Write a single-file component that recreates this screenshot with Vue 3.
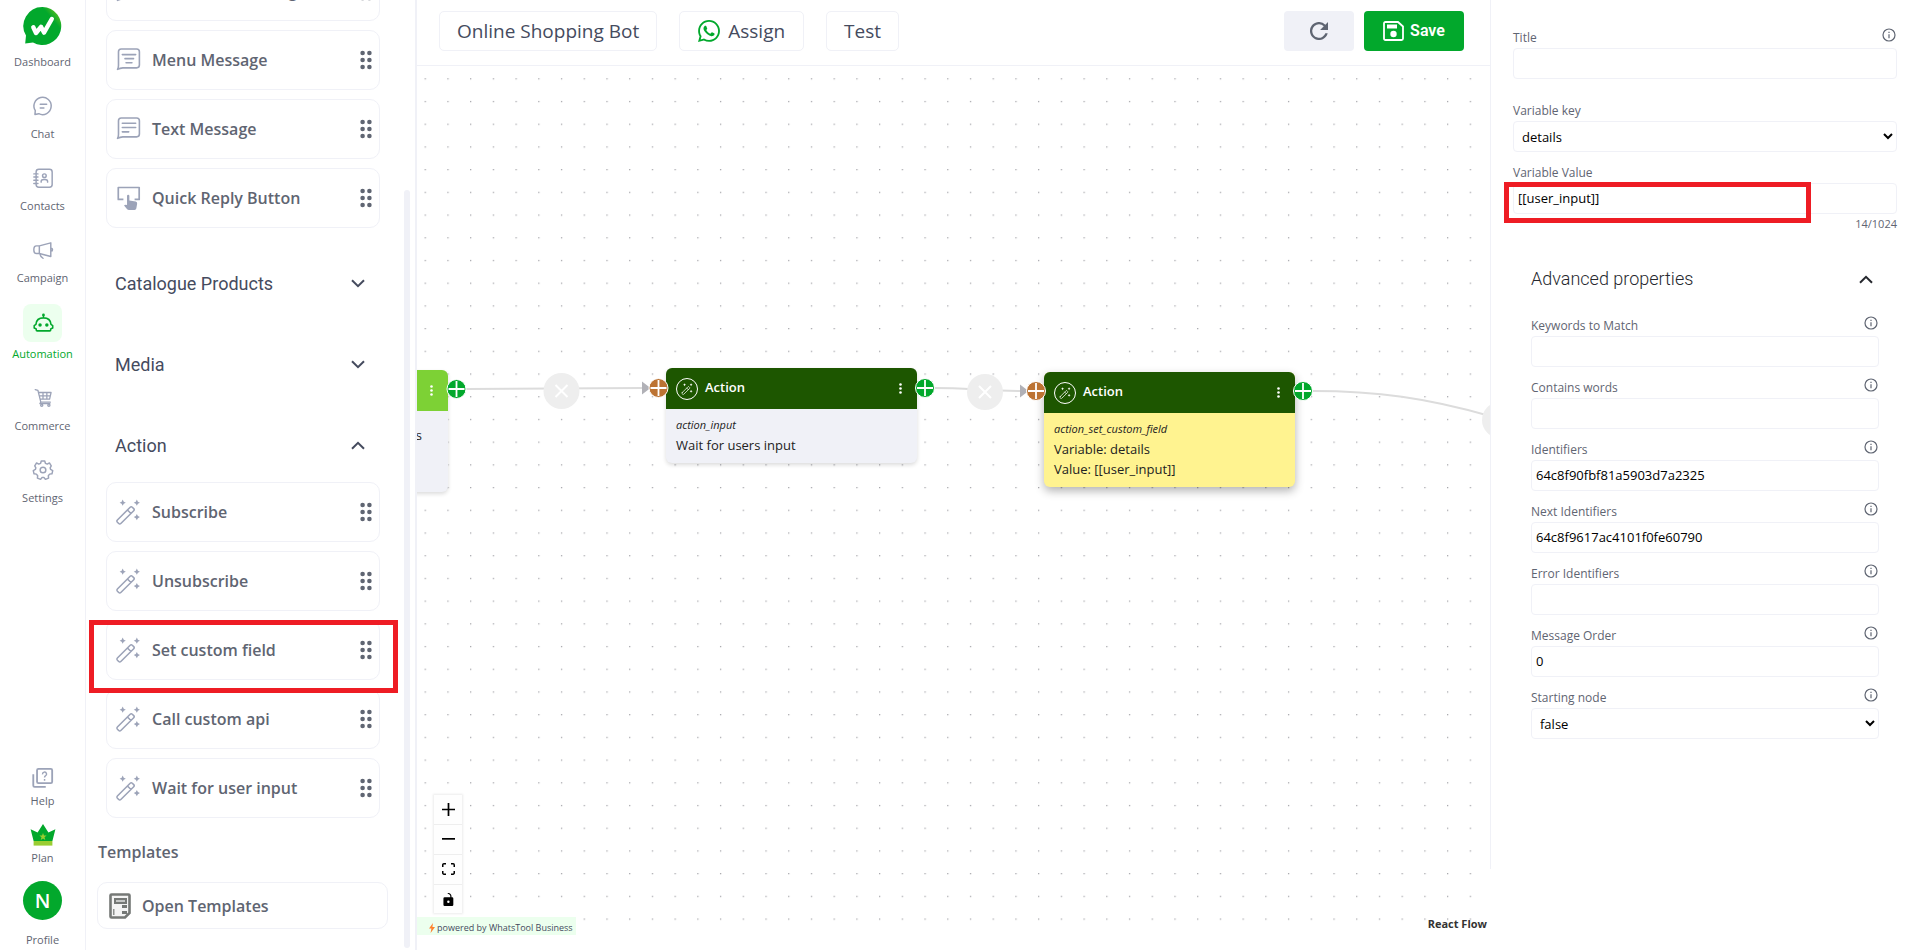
<script setup>
import { ref } from 'vue'

const stroke = (body, width = 1.6) =>
  `<g fill="none" stroke="currentColor" stroke-width="${width}" stroke-linecap="round" stroke-linejoin="round">${body}</g>`

const bubble = 'M2.5 21C3.2 19.9 3.4 18.8 3.4 17.4V4.6Q3.4 2 6 2H20.4Q23 2 23 4.6V17Q23 19.6 20.4 19.6H7.5Q5 19.8 2.5 21Z'
const sparkle = (x, y) => `<path d="M${x} ${y - 3}L${x + 1} ${y - 1}L${x + 3} ${y}L${x + 1} ${y + 1}L${x} ${y + 3}L${x - 1} ${y + 1}L${x - 3} ${y}L${x - 1} ${y - 1}Z" fill="currentColor"/>`

const icons = {
  chat: stroke('<path d="M3.2 21.2L3.6 17A9.4 9.4 0 1 1 7.4 20.4Z"/><path d="M9 10.2H16M9 14.2H13"/>', 1.6),
  contacts: stroke('<rect x="4.5" y="2.5" width="17.5" height="19.5" rx="3"/><path d="M2 7.5H6.5M2 11H6.5M2 14.5H6.5M2 18H6.5"/><circle cx="13.5" cy="9.5" r="2"/><path d="M10 16.5V15.5Q10 13.6 13.5 13.6T17 15.5V16.5"/>', 1.6),
  campaign: stroke('<path d="M8 7.5L20.5 4.2V19L8 15.8H5Q2 15.8 2 11.6T5 7.5ZM8 7.5V15.8M20.5 10Q22.4 10 22.4 11.7T20.5 13.4M8.5 16Q9 19 12 21"/>', 1.6),
  automation: stroke('<path d="M12.5 5.5V3.5M4.3 13.5Q4.8 6.4 12.5 6.4T20.7 13.5L22.6 14.8V17.4L20.4 18.4V19.6Q20.4 20.6 19.4 20.6H5.6Q4.6 20.6 4.6 19.6V18.4L2.4 17.4V14.8Z"/>', 1.7) +
    '<circle cx="12.5" cy="3.2" r="1.5" fill="currentColor"/><circle cx="8.8" cy="14.2" r="1.9" fill="currentColor"/><circle cx="16.2" cy="14.2" r="1.9" fill="currentColor"/>',
  commerce: stroke('<path d="M3.5 2.8L6.5 3.8L9.6 16.5H20M7.2 6H20.8L19.2 13.2H9M7.8 9.6H20M12 6V13.2M16.2 6V13.2M9.6 16.5L8.6 18.2H19.5"/><circle cx="10.6" cy="19.8" r="1.2"/><circle cx="18.4" cy="19.8" r="1.2"/>', 1.4),
  settings: stroke('<circle cx="12" cy="12" r="3.1"/><path d="M10.1 2.2H13.9L14.6 4.7L16.7 5.6L19 4.3L21 7.6L19.8 9.7L20.3 11.4L22.6 12.6L21.8 16.2L19.2 16.5L17.8 18.2L18.1 20.8L14.6 22.2L13 20.1H11L9.4 22.2L5.9 20.8L6.2 18.2L4.8 16.5L2.2 16.2L1.4 12.6L3.7 11.4L4.2 9.7L3 7.6L5 4.3L7.3 5.6L9.4 4.7Z"/>', 1.6),
  help: '<g fill="none" stroke="currentColor" stroke-width="2"><rect x="5.5" y="2" width="16.5" height="15.5" rx="1.5"/><path d="M1.4 8V20.2Q1.4 21.6 2.8 21.6H15"/></g><path d="M11.5 8A2.2 2.2 0 1 1 14.6 9.7Q13.7 10.3 13.7 11.5M13.7 13.2V15" fill="none" stroke="currentColor" stroke-width="1.6"/>',
  menuMessage: stroke(`<path d="${bubble}"/><path d="M7 7.2H19.5M9.5 11H17.5M10.5 14.8H16"/>`, 1.5),
  textMessage: stroke(`<path d="${bubble}"/><path d="M7 6.9H19.5M7 10.9H19.5M7 14.9H13"/>`, 1.5),
  quickReply: '<path d="M8 13.6H3.2V2.4H22.8V13.6H18.5" fill="none" stroke="currentColor" stroke-width="1.6" stroke-linejoin="round"/><path d="M11.4 10.3Q11.4 9.1 12.5 9.1T13.6 10.3V14.6L19.5 15.6Q21.1 16 20.9 17.6L20.1 22.2Q19.8 23.6 18.5 23.6H13.2Q12.2 23.6 11.5 22.9L8.6 19.2Q9.6 18 11.4 18.8Z" fill="currentColor"/>',
  wand: stroke('<path d="M2.3 20.2L14.6 7.9Q15.6 6.9 16.6 7.9L18 9.3Q19 10.3 18 11.3L5.6 23.6Q4.6 24.6 3.6 23.6L2.3 22.3Q1.3 21.2 2.3 20.2ZM12 10.6L15.3 14"/>', 1.5) +
    sparkle(7.4, 3.6) + sparkle(21, 3.6) + sparkle(21, 17.4)
}

const navItems = [
  { label: 'Chat', icon: 'chat' },
  { label: 'Contacts', icon: 'contacts' },
  { label: 'Campaign', icon: 'campaign' },
  { label: 'Automation', icon: 'automation', active: true },
  { label: 'Commerce', icon: 'commerce' },
  { label: 'Settings', icon: 'settings' }
]

const messageBlocks = [
  { label: 'Interactive Message', icon: 'menuMessage' },
  { label: 'Menu Message', icon: 'menuMessage' },
  { label: 'Text Message', icon: 'textMessage' },
  { label: 'Quick Reply Button', icon: 'quickReply' }
]

const actionBlocks = [
  { label: 'Subscribe' },
  { label: 'Unsubscribe' },
  { label: 'Set custom field', marked: true },
  { label: 'Call custom api' },
  { label: 'Wait for user input' }
]

const nodes = [
  { cls: 'node-input', type: 'action_input', lines: ['Wait for users input'] },
  { cls: 'node-field', type: 'action_set_custom_field', lines: ['Variable: details', 'Value: [[user_input]]'] }
]

const title = ref('')
const variableKey = ref('details')
const variableValue = ref('[[user_input]]')
const startingNode = ref('false')
const advancedFields = ref([
  { id: 'keywords', label: 'Keywords to Match', value: '' },
  { id: 'contains', label: 'Contains words', value: '' },
  { id: 'identifiers', label: 'Identifiers', value: '64c8f90fbf81a5903d7a2325' },
  { id: 'next', label: 'Next Identifiers', value: '64c8f9617ac4101f0fe60790' },
  { id: 'error', label: 'Error Identifiers', value: '' },
  { id: 'order', label: 'Message Order', value: '0' }
])
</script>

<template>
  <div class="app">
    <nav class="rail">
      <a class="rail-item logo-item" href="#">
        <svg class="logo" viewBox="0 0 39 38">
          <defs>
            <linearGradient id="logoShade" x1="0.55" y1="0.25" x2="0.85" y2="0">
              <stop offset="0.3" stop-color="#02a82c" />
              <stop offset="1" stop-color="#63c020" />
            </linearGradient>
          </defs>
          <path d="M19.5 0A19 19 0 1 1 10 35.6L2.2 36.4L3 28.6A19 19 0 0 1 19.5 0Z" fill="url(#logoShade)" />
          <path d="M10.3 20.3L13 26L18 19.8L21 25.6L28.8 12" fill="none" stroke="#fff" stroke-width="4.4" stroke-linecap="round" stroke-linejoin="round" />
        </svg>
        <span>Dashboard</span>
      </a>
      <a v-for="item in navItems" :key="item.label" class="rail-item" :class="{ active: item.active }" href="#">
        <span class="rail-icon"><svg viewBox="0 0 24 24" v-html="icons[item.icon]"></svg></span>
        <span>{{ item.label }}</span>
      </a>
      <div class="rail-bottom">
        <a class="rail-item small-item" href="#">
          <svg class="help-icon" viewBox="0 0 24 24" v-html="icons.help"></svg>
          <span>Help</span>
        </a>
        <a class="rail-item small-item" href="#">
          <svg class="crown" viewBox="0 0 26 22">
            <path d="M3.6 17L.6 5.2L7.6 8.4L13 0L18.4 8.4L25.4 5.2L22.4 17Z" fill="#02a82c" />
            <path d="M3.6 17H22.4V21.6H3.6Z" fill="#9acd32" />
            <path d="M13 9L14 11.6H16.6L14.5 13.3L15.3 16L13 14.4L10.7 16L11.5 13.3L9.4 11.6H12Z" fill="#9acd32" />
          </svg>
          <span>Plan</span>
        </a>
        <a class="rail-item profile-item" href="#">
          <span class="avatar">N</span>
          <span>Profile</span>
        </a>
      </div>
    </nav>

    <aside class="palette">
      <div class="blocks first-blocks">
        <div v-for="b in messageBlocks" :key="b.label" class="block">
          <svg class="block-icon" viewBox="2 1 22.5 22.5" v-html="icons[b.icon]"></svg>
          <span class="block-label">{{ b.label }}</span>
          <svg class="grip" viewBox="0 0 12 20"><g v-for="y in [3, 10, 17]" :key="y"><circle cx="2.6" :cy="y" r="2.3" /><circle cx="9.4" :cy="y" r="2.3" /></g></svg>
        </div>
      </div>
      <button type="button" class="group">Catalogue Products<svg class="chevron" viewBox="0 0 14 9"><path d="M1 1.2L7 7.2L13 1.2" /></svg></button>
      <button type="button" class="group">Media<svg class="chevron" viewBox="0 0 14 9"><path d="M1 1.2L7 7.2L13 1.2" /></svg></button>
      <button type="button" class="group">Action<svg class="chevron" viewBox="0 0 14 9"><path d="M1 7.8L7 1.8L13 7.8" /></svg></button>
      <div class="blocks">
        <div v-for="b in actionBlocks" :key="b.label" class="block">
          <svg class="block-icon wand-icon" viewBox="0 0 25 25" v-html="icons.wand"></svg>
          <span class="block-label">{{ b.label }}</span>
          <svg class="grip" viewBox="0 0 12 20"><g v-for="y in [3, 10, 17]" :key="y"><circle cx="2.6" :cy="y" r="2.3" /><circle cx="9.4" :cy="y" r="2.3" /></g></svg>
          <span v-if="b.marked" class="mark mark-block"></span>
        </div>
      </div>
      <h2 class="templates-title">Templates</h2>
      <button type="button" class="open-templates">
        <svg viewBox="0 0 22 26">
          <path d="M2.5 1.5H19.5Q20.5 1.5 20.5 2.5V20L16 24.5H2.5Q1.5 24.5 1.5 23.5V2.5Q1.5 1.5 2.5 1.5Z" fill="#f4f4f4" stroke="#757876" stroke-width="2.6" />
          <rect x="6" y="6" width="11" height="4" fill="#c4c6c5" stroke="#757876" stroke-width="2" />
          <path d="M13 13.5H18M13 19.5H18" stroke="#757876" stroke-width="3" />
          <path d="M4.8 16V22" stroke="#757876" stroke-width="1.2" />
        </svg>
        Open Templates
      </button>
      <span class="scroll-thumb"></span>
    </aside>

    <main class="stage">
      <header class="toolbar">
        <button type="button" class="tool">Online Shopping Bot</button>
        <button type="button" class="tool assign">
          <svg viewBox="2 2 20 20"><path fill="#02a82c" d="M12.04 2C6.58 2 2.13 6.45 2.13 11.91C2.13 13.66 2.59 15.36 3.45 16.86L2.05 22L7.3 20.62C8.75 21.41 10.38 21.83 12.04 21.83C17.5 21.83 21.95 17.38 21.95 11.92C21.95 9.27 20.92 6.78 19.05 4.91C17.18 3.03 14.69 2 12.04 2M12.05 3.67C14.25 3.67 16.31 4.53 17.87 6.09C19.42 7.65 20.28 9.72 20.28 11.92C20.28 16.46 16.58 20.15 12.04 20.15C10.56 20.15 9.11 19.76 7.85 19L7.55 18.83L4.43 19.65L5.26 16.61L5.06 16.29C4.24 15 3.8 13.47 3.8 11.91C3.81 7.37 7.5 3.67 12.05 3.67M8.53 7.33C8.37 7.33 8.1 7.39 7.87 7.64C7.65 7.89 7 8.5 7 9.71C7 10.93 7.89 12.1 8 12.27C8.14 12.44 9.76 14.94 12.25 16C12.84 16.27 13.3 16.42 13.66 16.53C14.25 16.72 14.79 16.69 15.22 16.63C15.7 16.56 16.68 16.03 16.89 15.45C17.1 14.87 17.1 14.38 17.04 14.27C16.97 14.17 16.81 14.11 16.56 14C16.31 13.86 15.09 13.26 14.87 13.18C14.64 13.1 14.5 13.06 14.31 13.3C14.15 13.55 13.67 14.11 13.53 14.27C13.38 14.44 13.24 14.46 13 14.34C12.74 14.21 11.94 13.95 11 13.11C10.26 12.45 9.77 11.64 9.62 11.39C9.5 11.15 9.61 11 9.73 10.89C9.84 10.78 10 10.6 10.1 10.45C10.23 10.31 10.27 10.2 10.35 10.04C10.43 9.87 10.39 9.73 10.33 9.61C10.27 9.5 9.77 8.26 9.56 7.77C9.36 7.29 9.16 7.35 9 7.34C8.86 7.34 8.7 7.33 8.53 7.33Z" /></svg>
          Assign
        </button>
        <button type="button" class="tool">Test</button>
        <span class="spacer"></span>
        <button type="button" class="reload" aria-label="Reload">
          <svg viewBox="4 4 16 16"><path fill="#5f6572" d="M17.65 6.35A8 8 0 1 0 19.73 14H17.65A6 6 0 1 1 12 6C13.66 6 15.14 6.69 16.22 7.78L13 11H20V4Z" /></svg>
        </button>
        <button type="button" class="save">
          <svg viewBox="0 0 21 20"><path d="M2.5 1H15L20 5.5V17.5Q20 19 18.5 19H2.5Q1 19 1 17.5V2.5Q1 1 2.5 1Z" fill="none" stroke="#fff" stroke-width="1.8" /><path d="M4 3.5H14V7.5H4Z" fill="#fff" /><circle cx="10.5" cy="13" r="3.2" fill="#fff" /></svg>
          Save
        </button>
      </header>

      <section class="canvas">
        <svg class="layer" width="100%" height="100%">
          <defs>
            <pattern id="dots" x="7.6" y="12.2" width="22.72" height="22.71" patternUnits="userSpaceOnUse">
              <circle cx="0.7" cy="0.7" r="0.65" fill="#8c8c92" />
            </pattern>
          </defs>
          <rect width="100%" height="100%" fill="url(#dots)" />
          <g fill="none" stroke="#dcdcdc" stroke-width="2">
            <path d="M49 323C110 323 170 322 226 322" />
            <path d="M517 322C550 322 570 325 604 325" />
            <path d="M896 325C960 325 1010 332 1073 350" />
          </g>
          <path d="M225 315.5L233.5 322L225 328.5ZM603 318.5L611.5 325L603 331.5Z" fill="#b1b1b7" />
          <g v-for="e in [[144.5, 325], [568, 326], [1083, 354]]" :key="e[0]">
            <circle :cx="e[0]" :cy="e[1]" r="18" fill="#eee" />
            <path :d="`M${e[0] - 6} ${e[1] - 6}l12 12m0 -12l-12 12`" stroke="#fff" stroke-width="2" />
          </g>
        </svg>

        <article class="node node-text">
          <div class="node-head"><svg class="dots-menu" viewBox="0 0 3 11"><circle v-for="y in [1.5, 5.5, 9.5]" :key="y" cx="1.5" :cy="y" r="1.3" /></svg></div>
          <div class="node-body"><p>keywords</p></div>
        </article>
        <article v-for="n in nodes" :key="n.cls" class="node" :class="n.cls">
          <div class="node-head">
            <span class="node-icon"><svg viewBox="0 0 25 25" v-html="icons.wand"></svg></span>
            <span class="node-title">Action</span>
            <svg class="dots-menu" viewBox="0 0 3 11"><circle v-for="y in [1.5, 5.5, 9.5]" :key="y" cx="1.5" :cy="y" r="1.3" /></svg>
          </div>
          <div class="node-body">
            <em>{{ n.type }}</em>
            <p v-for="l in n.lines" :key="l">{{ l }}</p>
          </div>
        </article>

        <svg class="layer ports" width="100%" height="100%">
          <g v-for="p in [[39.5, 323, '#02a82c'], [241.5, 322, '#bc7333'], [508, 322, '#02a82c'], [619, 325, '#bc7333'], [886, 325, '#02a82c']]" :key="p[0]">
            <circle :cx="p[0]" :cy="p[1]" r="9.5" :fill="p[2]" stroke="#fff" stroke-width="1" />
            <path :d="`M${p[0] - 8} ${p[1]}h16M${p[0]} ${p[1] - 8}v16`" stroke="#fff" stroke-width="1.8" />
          </g>
        </svg>

        <div class="controls">
          <button type="button" aria-label="Zoom in"><svg viewBox="0 0 32 32"><path d="M32 18.133H18.133V32h-4.266V18.133H0v-4.266h13.867V0h4.266v13.867H32z" /></svg></button>
          <button type="button" aria-label="Zoom out"><svg viewBox="0 0 32 5"><path d="M0 0h32v4.2H0z" /></svg></button>
          <button type="button" aria-label="Fit view"><svg viewBox="0 0 32 30"><path d="M3.692 4.63c0-.53.4-.938.939-.938h5.215V0H4.708C2.13 0 0 2.054 0 4.63v5.216h3.692V4.631zM27.354 0h-5.2v3.692h5.17c.53 0 .984.4.984.939v5.215H32V4.631A4.624 4.624 0 0027.354 0zm.954 24.83c0 .532-.4.94-.939.94h-5.215v3.768h5.215c2.577 0 4.631-2.13 4.631-4.707v-5.139h-3.692v5.139zm-23.677.94a.919.919 0 01-.939-.94v-5.138H0v5.139c0 2.577 2.13 4.707 4.708 4.707h5.138V25.77H4.631z" /></svg></button>
          <button type="button" aria-label="Lock"><svg viewBox="0 0 25 32"><path d="M21.333 10.667H19.81V7.619C19.81 3.429 16.38 0 12.19 0c-4.114 1.828-1.37 2.133.305 2.438 1.676.305 4.42 2.59 4.42 5.181v3.048H3.047A3.056 3.056 0 000 13.714v15.238A3.056 3.056 0 003.048 32h18.285a3.056 3.056 0 003.048-3.048V13.714a3.056 3.056 0 00-3.048-3.047zM12.19 24.533a3.056 3.056 0 01-3.047-3.047 3.056 3.056 0 013.047-3.048 3.056 3.056 0 013.048 3.048 3.056 3.056 0 01-3.048 3.047z" /></svg></button>
        </div>
        <div class="powered"><svg viewBox="0 0 6 10"><path d="M4 0L0 5.6H2.4L1.6 10L6 4H3.4Z" fill="#ff822d" /></svg>powered by WhatsTool Business</div>
        <a class="attribution" href="#">React Flow</a>
      </section>
    </main>

    <aside class="props">
      <div class="field">
        <label for="title">Title</label>
        <svg class="info" viewBox="0 0 14 14"><circle cx="7" cy="7" r="6" /><path d="M7 6.2V10.2M7 3.8V5" /></svg>
        <input id="title" v-model="title" type="text" />
      </div>
      <div class="field">
        <label for="key">Variable key</label>
        <select id="key" v-model="variableKey"><option>details</option></select>
      </div>
      <div class="field">
        <label for="value">Variable Value</label>
        <input id="value" v-model="variableValue" type="text" />
        <span class="mark mark-field"></span>
      </div>
      <div class="counter">{{ variableValue.length }}/1024</div>

      <section class="advanced">
        <button type="button" class="advanced-head">Advanced properties<svg class="chevron" viewBox="0 0 14 9"><path d="M1 7.8L7 1.8L13 7.8" /></svg></button>
        <div v-for="f in advancedFields" :key="f.id" class="field">
          <label :for="f.id">{{ f.label }}</label>
          <svg class="info" viewBox="0 0 14 14"><circle cx="7" cy="7" r="6" /><path d="M7 6.2V10.2M7 3.8V5" /></svg>
          <input :id="f.id" v-model="f.value" type="text" />
        </div>
        <div class="field">
          <label for="start">Starting node</label>
          <svg class="info" viewBox="0 0 14 14"><circle cx="7" cy="7" r="6" /><path d="M7 6.2V10.2M7 3.8V5" /></svg>
          <select id="start" v-model="startingNode"><option>false</option></select>
        </div>
      </section>
    </aside>
  </div>
</template>

<style>
body {
  background: #fff;
}
</style>

<style scoped>
.app {
  display: flex;
  height: 100vh;
  min-height: 720px;
  overflow: hidden;
  font-family: "Open Sans", "Noto Sans", sans-serif;
  color: #5f6572;
}
.app * {
  box-sizing: border-box;
}
button,
input,
select {
  font-family: inherit;
  margin: 0;
}
button {
  background: none;
  border: 0;
  padding: 0;
  cursor: pointer;
}
a {
  color: inherit;
  text-decoration: none;
}

/* Navigation rail */
.rail {
  flex: 0 0 86px;
  display: flex;
  flex-direction: column;
  gap: 16px;
  padding: 7px 0 2px;
  border-right: 1px solid #f0f1f7;
}
.rail-item {
  display: flex;
  flex-direction: column;
  align-items: center;
  font-size: 11px;
  line-height: 16px;
}
.logo-item {
  gap: 9px;
}
.logo {
  width: 39px;
  height: 38px;
}
.rail-icon {
  display: flex;
  align-items: center;
  justify-content: center;
  height: 40px;
  color: #9ca3b8;
}
.rail-icon svg {
  width: 22px;
  height: 22px;
}
.active {
  color: #02a82c;
}
.active .rail-icon {
  width: 39px;
  height: 38px;
  margin: 2px 0 4px;
  border-radius: 8px;
  background: #ecffee;
  color: #02a82c;
}
.rail-bottom {
  display: flex;
  flex-direction: column;
  gap: 15px;
  margin-top: auto;
}
.small-item {
  gap: 4px;
}
.help-icon {
  width: 22px;
  height: 22px;
  color: #9ca3b8;
}
.crown {
  width: 26px;
  height: 22px;
}
.profile-item {
  gap: 12px;
}
.avatar {
  display: flex;
  align-items: center;
  justify-content: center;
  width: 39px;
  height: 39px;
  border-radius: 50%;
  background: #02a82c;
  color: #fff;
  font-size: 20px;
  font-weight: 600;
}

/* Block palette */
.palette {
  position: relative;
  flex: 0 0 331px;
  display: flex;
  flex-direction: column;
  border-right: 2px solid #f0f1f7;
  overflow: hidden;
}
.blocks {
  display: flex;
  flex-direction: column;
  gap: 9px;
  margin: 0 35px 0 20px;
}
.first-blocks {
  margin-top: -39px;
  margin-bottom: 15px;
}
.block {
  position: relative;
  display: flex;
  align-items: center;
  height: 60px;
  flex-shrink: 0;
  padding: 0 7px 1px 10px;
  border: 1px solid #f0f1f7;
  border-radius: 10px;
}
.block-icon {
  width: 24px;
  height: 24px;
  margin-right: 11px;
  color: #9ca3b8;
  overflow: visible;
}
.wand-icon {
  width: 26px;
  height: 26px;
  margin-left: -2px;
}
.block-label {
  flex: 1;
  font-size: 16px;
  font-weight: 600;
  line-height: 24px;
}
.grip {
  width: 12px;
  height: 20px;
  fill: #5f6572;
}
.group {
  display: flex;
  align-items: center;
  justify-content: space-between;
  height: 81px;
  flex-shrink: 0;
  padding: 0 50px 0 29px;
  color: #454b5e;
  font-family: Roboto, sans-serif;
  font-size: 18px;
}
.group + .blocks {
  margin-top: -4px;
}
.chevron {
  width: 14px;
  height: 9px;
  fill: none;
  stroke: currentColor;
  stroke-width: 2;
}
.templates-title {
  margin: 22px 0 18px 12px;
  font-size: 16px;
  font-weight: 600;
  line-height: 24px;
}
.open-templates {
  display: flex;
  align-items: center;
  gap: 11px;
  height: 47px;
  flex-shrink: 0;
  margin: 0 27px 0 11px;
  padding: 0 11px;
  border: 1px solid #f0f1f7;
  border-radius: 10px;
  color: inherit;
  font-size: 16px;
  font-weight: 600;
}
.open-templates svg {
  width: 22px;
  height: 26px;
}
.scroll-thumb {
  position: absolute;
  top: 20%;
  bottom: 2px;
  right: 5px;
  width: 6px;
  border-radius: 3px;
  background: #f0f1f7;
}
.mark {
  position: absolute;
  border: 5px solid #ee1c24;
  pointer-events: none;
  z-index: 2;
}
.mark-block {
  inset: -1px -19px -14px -18px;
}
.mark-field {
  left: -9px;
  right: 86px;
  top: 17px;
  bottom: -9px;
}

/* Toolbar */
.stage {
  flex: 1;
  min-width: 0;
  display: flex;
  flex-direction: column;
}
.toolbar {
  display: flex;
  align-items: center;
  flex: 0 0 66px;
  padding: 0 26px 4px 22px;
  border-bottom: 1px solid #f0f1f7;
}
.tool {
  display: flex;
  align-items: center;
  gap: 8px;
  height: 40px;
  margin-right: 22px;
  padding: 0 17px;
  border: 1px solid #f0f1f7;
  border-radius: 5px;
  color: #454b5e;
  font-size: 19px;
}
.assign {
  padding: 0 18px;
}
.assign svg {
  width: 22px;
  height: 22px;
}
.spacer {
  flex: 1;
}
.reload,
.save {
  display: flex;
  align-items: center;
  justify-content: center;
  height: 40px;
  border-radius: 4px;
}
.reload {
  width: 70px;
  margin-right: 10px;
  background: #f0f1f7;
}
.reload svg {
  width: 18px;
  height: 18px;
}
.save {
  gap: 6px;
  width: 100px;
  background: #02a82c;
  color: #fff;
  font-family: Roboto, sans-serif;
  font-size: 16px;
  font-weight: 600;
}
.save svg {
  width: 21px;
  height: 20px;
}

/* Flow canvas */
.canvas {
  position: relative;
  flex: 1;
  margin-bottom: 15px;
  overflow: hidden;
}
.layer {
  position: absolute;
  inset: 0;
}
.ports {
  pointer-events: none;
}
.node {
  position: absolute;
  width: 251px;
  border-radius: 6px;
  overflow: hidden;
  color: #222;
  background: #f0f1f7;
  box-shadow: 0 2px 4px rgba(0, 0, 0, 0.14);
}
.node-text {
  left: -220px;
  top: 304px;
  height: 122px;
}
.node-input {
  left: 249px;
  top: 302px;
}
.node-field {
  left: 627px;
  top: 306px;
  background: #fff390;
  box-shadow: 0 4px 10px rgba(0, 0, 0, 0.3);
}
.node-head {
  display: flex;
  align-items: center;
  height: 41px;
  padding: 0 15px 0 10px;
  background: #1d5600;
  color: #fff;
}
.node-text .node-head {
  background: #7dd135;
}
.node-icon {
  display: flex;
  align-items: center;
  justify-content: center;
  width: 22px;
  height: 22px;
  margin-right: 7px;
  border: 1px solid #fff;
  border-radius: 50%;
}
.node-icon svg {
  width: 12px;
  height: 12px;
}
.node-title {
  padding-bottom: 3px;
  font-size: 13px;
  font-weight: 600;
}
.dots-menu {
  width: 3px;
  height: 11px;
  margin-left: auto;
  fill: #fff;
}
.node-body {
  padding: 6px 10px 8px;
  font-size: 13px;
  line-height: 20px;
}
.node-text .node-body {
  padding: 14px 26px;
  text-align: right;
}
.node-body em {
  display: block;
  font-size: 11px;
}
.node-body p {
  margin: 0;
}
.controls {
  position: absolute;
  left: 17px;
  bottom: 22px;
  display: flex;
  flex-direction: column;
  box-shadow: 0 0 2px 1px rgba(0, 0, 0, 0.08);
}
.controls button {
  display: flex;
  align-items: center;
  justify-content: center;
  width: 28px;
  height: 30px;
  background: #fefefe;
  border-bottom: 1px solid #eee;
}
.controls button:last-child {
  height: 28px;
  border-bottom: 0;
}
.controls svg {
  width: 13px;
  max-height: 13px;
}
.powered {
  position: absolute;
  left: 0;
  bottom: 0;
  display: flex;
  align-items: center;
  gap: 2px;
  height: 18px;
  padding: 3px 3px 0 12px;
  background: #ecffee;
  color: #454b5e;
  font-size: 9px;
}
.powered svg {
  width: 6px;
  height: 10px;
}
.attribution {
  position: absolute;
  right: 3px;
  bottom: 3px;
  color: #333;
  font-size: 11px;
  font-weight: 700;
  line-height: 16px;
}

/* Properties panel */
.props {
  flex: 0 0 423px;
  align-self: flex-start;
  height: calc(100% - 81px);
  padding: 30px 16px 0 22px;
  border-left: 1px solid #f0f1f7;
}
.field {
  position: relative;
  display: grid;
  grid-template-columns: 1fr auto;
  row-gap: 2px;
  margin-bottom: 13px;
}
.props > .field:first-child {
  margin-bottom: 24px;
}
label {
  font-size: 12px;
  line-height: 16px;
}
.info {
  width: 14px;
  height: 14px;
  margin: -2px 1px 0 0;
  fill: none;
  stroke: #5f6572;
  stroke-width: 1.2;
}
.field input,
.field select {
  grid-column: 1 / -1;
  width: 100%;
  height: 31px;
  padding: 0 4px 1px;
  border: 1px solid #f0f1f7;
  border-radius: 4px;
  background: #fff;
  color: #000;
  font-size: 13px;
}
.field select {
  padding: 0 4px;
}
.counter {
  margin-top: -11px;
  text-align: right;
  font-size: 11px;
  line-height: 16px;
}
.advanced {
  padding: 0 18px;
}
.advanced-head {
  display: flex;
  align-items: center;
  justify-content: space-between;
  width: 100%;
  padding: 35px 6px 27px 0;
  color: #26282e;
  font-family: Roboto, sans-serif;
  font-size: 18px;
  font-weight: 300;
  line-height: 24px;
}
</style>
